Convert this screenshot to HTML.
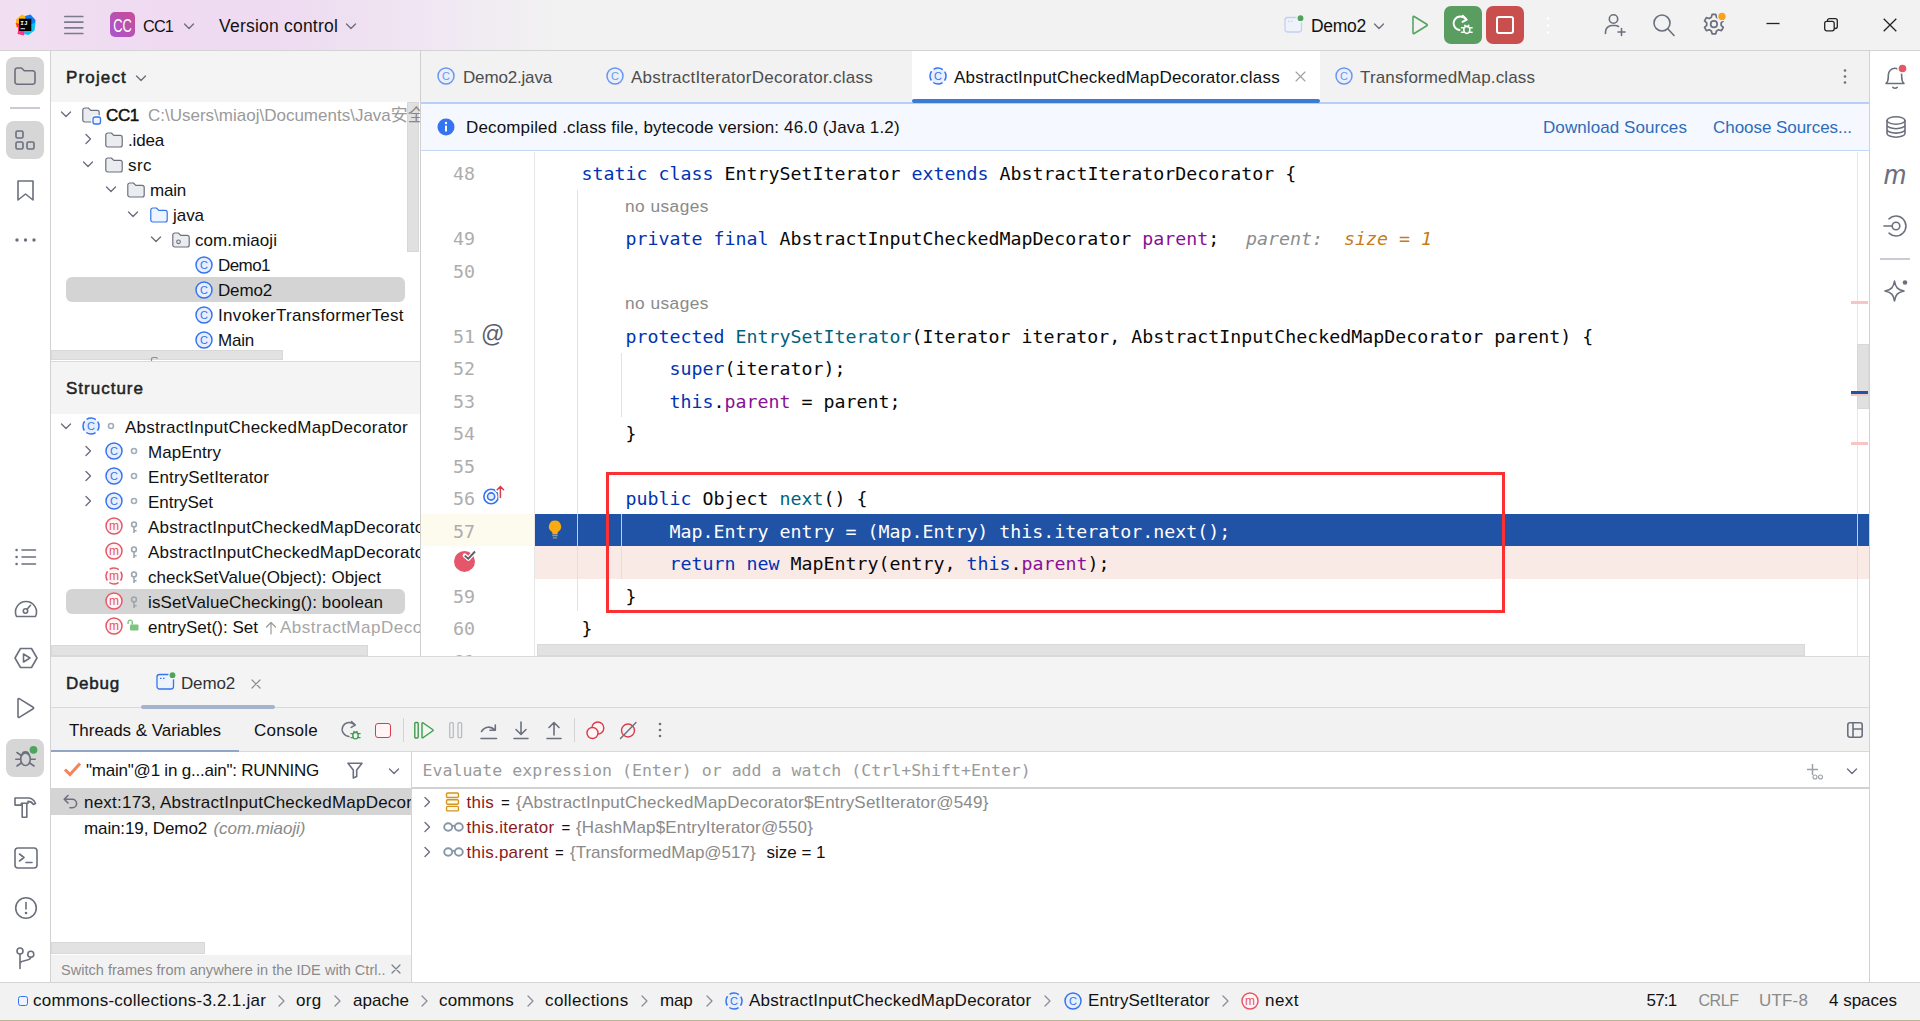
<!DOCTYPE html>
<html lang="en"><head><meta charset="utf-8"><title>CC1 – AbstractInputCheckedMapDecorator.class</title>
<style>
*{box-sizing:border-box;margin:0;padding:0}
html,body{width:1920px;height:1021px;overflow:hidden;background:#fff}
body{position:relative;font-family:"Liberation Sans","Noto Sans CJK SC",sans-serif;font-size:17px;color:#111;}
.a{position:absolute}
.t{position:absolute;white-space:pre;line-height:24px;height:24px;}
.t>span{position:relative;top:1px}
.b{font-weight:normal;-webkit-text-stroke:0.5px currentColor}
.g{color:#8a8a8a}
.m{font-family:"Liberation Mono","DejaVu Sans Mono",monospace}
svg{position:absolute;overflow:visible}
.ic{fill:none;stroke:#6c707e;stroke-width:1.6;stroke-linecap:round;stroke-linejoin:round}
/* regions */
#title{left:0;top:0;width:1920px;height:50px;background:linear-gradient(90deg,#f1dff1 0px,#efdaf2 180px,#eedcf1 300px,#f0e6f2 420px,#f2f2f2 560px,#f2f2f2 100%);}
#titleb{left:0;top:50px;width:1920px;height:1px;background:#d3d3d3}
#lstrip{left:0;top:51px;width:50px;height:931px;background:#fff}
#lstripb{left:50px;top:51px;width:1px;height:931px;background:#d2d2d2}
#rstrip{left:1870px;top:51px;width:50px;height:931px;background:#fff}
#rstripb{left:1869px;top:51px;width:1px;height:931px;background:#d2d2d2}
#projhead{left:51px;top:51px;width:369px;height:51px;background:#f4f4f4}
#projtree{left:51px;top:102px;width:369px;height:260px;background:#fff;overflow:hidden}
#structhead{left:51px;top:362px;width:369px;height:52px;background:#f4f4f4}
#structtree{left:51px;top:412px;width:369px;height:245px;background:#fff;overflow:hidden}
#edb{left:420px;top:51px;width:1px;height:606px;background:#cfcfcf}
#tabs{left:421px;top:51px;width:1448px;height:51px;background:#f2f2f2}
#banner{left:421px;top:104px;width:1448px;height:47px;background:#f5f8fe}
#editor{left:421px;top:152px;width:1448px;height:505px;background:#fff;overflow:hidden}
#debug{left:51px;top:657px;width:1818px;height:325px;background:#fff}
#status{left:0;top:982px;width:1920px;height:39px;background:#f2f2f2}
.row{position:absolute;left:0;width:100%;height:25px}
.code{position:absolute;white-space:pre;font-family:"DejaVu Sans Mono","Liberation Mono",monospace;font-size:18.27px;line-height:35px;height:35px;color:#080808;left:116.5px}
.ln{position:absolute;white-space:pre;font-family:"DejaVu Sans Mono","Liberation Mono",monospace;font-size:18.27px;line-height:35px;height:35px;color:#adadad;left:31px;width:23px;text-align:right}
.k{color:#0033b3}.f{color:#871094}.d{color:#00627a}
.hint{position:absolute;white-space:pre;font-size:17.3px;line-height:35px;height:35px;color:#8a8a8a;left:204px}
</style></head><body>
<div class="a" id="title"></div><div class="a" id="titleb"></div>
<div class="a" id="lstrip"></div><div class="a" id="lstripb"></div>
<div class="a" id="rstrip"></div><div class="a" id="rstripb"></div>
<div class="a" id="projhead"></div><div class="a" id="projtree"></div>
<div class="a" id="structhead"></div><div class="a" id="structtree"></div>
<div class="a" id="edb"></div>
<div class="a" id="tabs"></div>
<div class="a" id="banner"></div>
<div class="a" id="editor">
<div class="a" style="left:0;top:362px;width:114px;height:32px;background:#fdfaee"></div>
<div class="a" style="left:114px;top:362px;width:1334px;height:32px;background:#2052a5"></div>
<div class="a" style="left:114px;top:394px;width:1334px;height:33px;background:#faeae6"></div>
<div class="a" style="left:113px;top:0;width:1px;height:505px;background:#e6e6e6"></div>
<div class="a" style="left:156px;top:38px;width:1px;height:421px;background:#e2e2e2"></div>
<div class="a" style="left:200px;top:201px;width:1px;height:64px;background:#e2e2e2"></div>
<div class="a" style="left:200px;top:362px;width:1px;height:65px;background:#e2e2e2"></div>
<div class="a" style="left:156px;top:362px;width:1px;height:32px;background:#c3cce0"></div>
<div class="a" style="left:200px;top:362px;width:1px;height:32px;background:#c3cce0"></div>
<div class="a" style="left:156px;top:394px;width:1px;height:33px;background:#e6dcdc"></div>
<div class="a" style="left:200px;top:394px;width:1px;height:33px;background:#e6dcdc"></div>
<div class="ln" style="top:4px">48</div>
<div class="ln" style="top:69px">49</div>
<div class="ln" style="top:102px">50</div>
<div class="ln" style="top:167px">51</div>
<div class="ln" style="top:199px">52</div>
<div class="ln" style="top:232px">53</div>
<div class="ln" style="top:264px">54</div>
<div class="ln" style="top:297px">55</div>
<div class="ln" style="top:329px">56</div>
<div class="ln" style="top:362px">57</div>
<div class="ln" style="top:427px">59</div>
<div class="ln" style="top:459px">60</div>
<div class="ln" style="top:492px">61</div>
<div class="hint" style="top:37px"><span style="letter-spacing: 0.47px;">no usages</span></div>
<div class="hint" style="top:134px"><span style="letter-spacing: 0.47px;">no usages</span></div>
<div class="code" style="top:4px">    <span class="k">static</span> <span class="k">class</span> EntrySetIterator <span class="k">extends</span> AbstractIteratorDecorator {</div>
<div class="code" style="top:69px">        <span class="k">private</span> <span class="k">final</span> AbstractInputCheckedMapDecorator <span class="f">parent</span>;</div>
<div class="code" style="top:167px">        <span class="k">protected</span> <span class="d">EntrySetIterator</span>(Iterator iterator, AbstractInputCheckedMapDecorator parent) {</div>
<div class="code" style="top:199px">            <span class="k">super</span>(iterator);</div>
<div class="code" style="top:232px">            <span class="k">this</span>.<span class="f">parent</span> = parent;</div>
<div class="code" style="top:264px">        }</div>
<div class="code" style="top:329px">        <span class="k">public</span> Object <span class="d">next</span>() {</div>
<div class="code" style="top:362px"><span style="color:#fff">            Map.Entry entry = (Map.Entry) this.iterator.next();</span></div>
<div class="code" style="top:394px">            <span class="k">return</span> <span class="k">new</span> MapEntry(entry, <span class="k">this</span>.<span class="f">parent</span>);</div>
<div class="code" style="top:427px">        }</div>
<div class="code" style="top:459px">    }</div>
<div class="code" style="top:69px;left:825px;font-style:italic;color:#8c8c8c">parent:</div>
<div class="code" style="top:69px;left:923px;font-style:italic;color:#c77c1a">size = 1</div>
<div class="t" style="left:60px;top:166px;font-size:23px;color:#5a5d6b;line-height:33px;height:33px">@</div>
<svg style="left:62px;top:332px" width="24" height="22" viewBox="0 0 24 22"><circle cx="8.1" cy="12.5" r="7.2" fill="none" stroke="#3574f0" stroke-width="1.6"></circle><circle cx="8.1" cy="12.5" r="3.6" fill="#e7effd" stroke="#3574f0" stroke-width="1.6"></circle><path d="M17.400 14V2.800M14.200 6l3.200-3.400 3.200 3.400" fill="none" stroke="#fff" stroke-width="4.200" stroke-linecap="round" stroke-linejoin="round"></path><path d="M17.400 13.500V2.500M14.200 5.800l3.200-3.400 3.200 3.400" fill="none" stroke="#db3b4b" stroke-width="1.500" stroke-linecap="round" stroke-linejoin="round"></path></svg>
<svg style="left:124px;top:367px" width="20" height="22" viewBox="0 0 20 22"><path d="M10 1.400a6.100 6.100 0 0 0-3.500 11.100c.7.600 1 1.200 1 2v.700h5V14.500c0-.800.300-1.400 1-2A6.100 6.100 0 0 0 10 1.400z" fill="#fbaa12"></path><path d="M7.300 16.500h5.400M7.900 18.800h4.200" stroke="#a39a6b" stroke-width="1.300"></path></svg>
<svg style="left:31px;top:396px" width="28" height="28" viewBox="0 0 28 28"><circle cx="12.500" cy="13.400" r="10.500" fill="#e5566a"></circle><path d="M12.700 7.600l3.600 3.100 6.700-7.200" fill="none" stroke="#fff" stroke-width="4.200" stroke-linecap="round" stroke-linejoin="round"></path><path d="M12.700 7.600l3.600 3.100 6.700-7.200" fill="none" stroke="#5a6070" stroke-width="1.900" stroke-linecap="butt" stroke-linejoin="miter"></path></svg>
<div class="a" style="left:185px;top:320px;width:899px;height:141px;border:3px solid #fb3033"></div>
<div class="a" style="left:1436px;top:0;width:1px;height:505px;background:#e6e6e6"></div>
<div class="a" style="left:1436px;top:362px;width:1px;height:32px;background:#c3cce0"></div>
<div class="a" style="left:1436px;top:394px;width:1px;height:33px;background:#e6dcdc"></div>
<div class="a" style="left:1436px;top:192px;width:12px;height:65px;background:#e0e0e0;border:1px solid #d8d8d8"></div>
<div class="a" style="left:1430px;top:149px;width:17px;height:2.500px;background:#f9c4c4"></div>
<div class="a" style="left:1430px;top:239px;width:17px;height:2.500px;background:#2052a5"></div>
<div class="a" style="left:1430px;top:242px;width:17px;height:1.500px;background:#f9c4c4"></div>
<div class="a" style="left:1430px;top:290px;width:17px;height:2.500px;background:#f9c4c4"></div>
<div class="a" style="left:116px;top:492px;width:1268px;height:12px;background:#e2e2e2;border:1px solid #d9d9d9"></div>
</div>
<div class="a" id="debug"></div>
<div class="a" id="status"></div>

<svg width="0" height="0" style="position:absolute">
<defs>
<symbol id="cls" viewBox="0 0 18 18"><circle cx="9" cy="9" r="8" fill="#e7effd" stroke="#3574f0" stroke-width="1.5"></circle><text x="9.1" y="12.9" text-anchor="middle" font-family="Liberation Sans,sans-serif" font-size="11" fill="#3574f0">C</text></symbol>
<symbol id="clsd" viewBox="0 0 18 18"><circle cx="9" cy="9" r="8" fill="#e7effd" stroke="#3574f0" stroke-width="1.5" stroke-dasharray="9.8 2.77" stroke-dashoffset="4.9"></circle><text x="9.1" y="12.9" text-anchor="middle" font-family="Liberation Sans,sans-serif" font-size="11" fill="#3574f0">C</text></symbol>
<symbol id="mth" viewBox="0 0 18 18"><circle cx="9" cy="9" r="8" fill="#fff5f5" stroke="#e55765" stroke-width="1.5"></circle><text x="9" y="12.6" text-anchor="middle" font-family="Liberation Sans,sans-serif" font-size="12" fill="#e55765">m</text></symbol>
<symbol id="mthd" viewBox="0 0 18 18"><circle cx="9" cy="9" r="8" fill="#fff5f5" stroke="#e55765" stroke-width="1.5" stroke-dasharray="9.8 2.77" stroke-dashoffset="4.9"></circle><text x="9" y="12.6" text-anchor="middle" font-family="Liberation Sans,sans-serif" font-size="12" fill="#e55765">m</text></symbol>
<symbol id="fold" viewBox="0 0 18 18"><path d="M0.8 4a2 2 0 0 1 2-2h3.600l2.400 2.400h6.400a2 2 0 0 1 2 2v7.600a2 2 0 0 1-2 2H2.800a2 2 0 0 1-2-2z" fill="#ebecf0" stroke="#6c707e" stroke-width="1.2" stroke-linejoin="round"></path></symbol>
<symbol id="foldb" viewBox="0 0 18 18"><path d="M0.8 4a2 2 0 0 1 2-2h3.600l2.400 2.400h6.400a2 2 0 0 1 2 2v7.600a2 2 0 0 1-2 2H2.800a2 2 0 0 1-2-2z" fill="#edf3ff" stroke="#3574f0" stroke-width="1.2" stroke-linejoin="round"></path></symbol>
<symbol id="cd" viewBox="0 0 12 12"><path d="M1.5 4l4.5 4.5L10.5 4" fill="none" stroke="#6c707e" stroke-width="1.4" stroke-linecap="round" stroke-linejoin="round"></path></symbol>
<symbol id="cr" viewBox="0 0 12 12"><path d="M4 1.5l4.5 4.5L4 10.5" fill="none" stroke="#6c707e" stroke-width="1.4" stroke-linecap="round" stroke-linejoin="round"></path></symbol>
</defs></svg>

<svg style="left:14px;top:13px" width="24" height="24" viewBox="0 0 24 24"><path d="M2 6.500L8 1.500l5 3-3 8-8 2z" fill="#fdb60d"></path><path d="M1.500 10l5 1 3 11-6-1 1-5z" fill="#fe2857"></path><path d="M4 12l8 1-2 9.500-6-2z" fill="#ff318c"></path><path d="M11 3l5.500-1.500 5 5.500-1 8-7 1z" fill="#087cfa"></path><path d="M12 13l9.500-3.500-1 8-6 4.500-4.500-1z" fill="#07c3f2"></path><rect x="5" y="5.700" width="12.300" height="12.300" fill="#000"></rect><rect x="6.500" y="15.300" width="4.600" height="0.900" fill="#fff"></rect><text x="6.300" y="11.500" font-family="Liberation Mono,monospace" font-weight="bold" font-size="6" fill="#fff">IJ</text></svg>
<svg style="left:64px;top:15px" width="20" height="20" viewBox="0 0 20 20"><path d="M0.8 1.5h18M0.8 7.200h18M0.8 12.800h18M0.8 18.500h18" stroke="#797d8b" stroke-width="1.7" stroke-linecap="round"></path></svg>
<div class="a" style="left:110px;top:12px;width:25px;height:25px;border-radius:5px;background:linear-gradient(45deg,#a857d2,#c94b93)"></div>
<div class="t " style="left:100px;top:13.0px;width:45px;text-align:center;color:#fff;font-size:19px;transform:scaleX(0.68)"><span style="top:0.5px">CC</span></div>
<div class="t " style="left:143px;top:13.0px;font-size:16.3px"><span style="letter-spacing: -0.86px;">CC1</span></div>
<svg style="left:183px;top:19.5px" width="12" height="12"><use href="#cd"></use></svg>
<div class="t " style="left:219px;top:13.0px;font-size:17.5px"><span style="letter-spacing: 0.22px;">Version control</span></div>
<svg style="left:345px;top:19.5px" width="12" height="12"><use href="#cd"></use></svg>
<svg style="left:1284px;top:14px" width="22" height="20" viewBox="0 0 22 20"><rect x="1" y="3.5" width="16.5" height="14.5" rx="2.5" fill="#eef2fb" stroke="#c3d0ee" stroke-width="1.3"></rect><path d="M4 7.3h1.5M7 7.3h1.5" stroke="#c3d0ee" stroke-width="1.3"></path><circle cx="16.5" cy="4.2" r="4.2" fill="#f2f2f2"></circle><circle cx="16.5" cy="4.2" r="2.9" fill="#4fa45d"></circle></svg>
<div class="t " style="left:1311px;top:13.0px;font-size:17.5px"><span style="letter-spacing: -0.28px;">Demo2</span></div>
<svg style="left:1373px;top:19.5px" width="12" height="12"><use href="#cd"></use></svg>
<svg style="left:1410px;top:14px" width="20" height="22" viewBox="0 0 20 22"><path d="M3 3.2v15.6a.8.8 0 0 0 1.2.7l12.6-7.8a.8.8 0 0 0 0-1.4L4.2 2.5A.8.8 0 0 0 3 3.2z" fill="none" stroke="#55a561" stroke-width="1.6" stroke-linejoin="round"></path></svg>
<div class="a" style="left:1444px;top:6px;width:37.5px;height:37.5px;border-radius:7px;background:#599d60"></div>
<svg style="left:1452px;top:14px" width="22" height="22" viewBox="0 0 22 22"><path d="M14.300 5.800A6.800 6.800 0 1 0 7.500 16" fill="none" stroke="#fff" stroke-width="1.900" stroke-linecap="round"></path><path d="M10.800 1.800l3.900 3.800-4.200 2.300" fill="none" stroke="#fff" stroke-width="1.900" stroke-linecap="round" stroke-linejoin="round"></path><ellipse cx="14.800" cy="15.800" rx="3" ry="3.600" fill="none" stroke="#fff" stroke-width="1.600"></ellipse><path d="M12.800 11.300l1.200 1.400M16.800 11.300l-1.200 1.400M9.500 13.800h2.500M17.600 13.800h2.500M9.500 18.300h2.700M17.400 18.300h2.700" stroke="#fff" stroke-width="1.500" stroke-linecap="round"></path></svg>
<div class="a" style="left:1486px;top:6px;width:37.5px;height:37.5px;border-radius:7px;background:#c94f4f"></div>
<div class="a" style="left:1496px;top:16px;width:17.5px;height:17.5px;border-radius:3px;border:2.1px solid #fff"></div>
<svg style="left:1545px;top:16px" width="6" height="20"><circle cx="3" cy="2.5" r="1.3" fill="#fff"></circle><circle cx="3" cy="9.5" r="1.3" fill="#fff"></circle><circle cx="3" cy="16.5" r="1.3" fill="#fff"></circle></svg>
<svg style="left:1603px;top:12px" width="26" height="26" viewBox="0 0 26 26"><circle cx="10.5" cy="7" r="4.2" class="ic"></circle><path d="M2.5 21.5v-1.5a6.5 6.5 0 0 1 6.5-6.5h3a6.5 6.5 0 0 1 3.5 1" class="ic"></path><path d="M18.5 16.5v7M15 20h7" class="ic"></path></svg>
<svg style="left:1652px;top:13px" width="24" height="24" viewBox="0 0 24 24"><circle cx="10" cy="10" r="8" class="ic"></circle><path d="M16 16l6 6.5" class="ic"></path></svg>
<svg style="left:1701px;top:11px" width="28" height="28" viewBox="0 0 26 26"><path class="ic" d="M10.3 3.2h3.4l.7 2.7 1.9 1.1 2.7-.8 1.7 3-2 1.9v2.2l2 1.9-1.7 3-2.7-.8-1.9 1.1-.7 2.7h-3.4l-.7-2.7-1.9-1.1-2.7.8-1.7-3 2-1.9v-2.2l-2-1.9 1.7-3 2.7.8 1.9-1.1z"></path><circle cx="12" cy="12.2" r="3" class="ic"></circle><circle cx="19.5" cy="5" r="4.6" fill="#f2f2f2"></circle><circle cx="19.5" cy="5" r="3.4" fill="#f9a21b"></circle></svg>
<svg style="left:1766px;top:17px" width="14" height="14"><path d="M0.5 6.5h13" stroke="#222" stroke-width="1.3"></path></svg>
<svg style="left:1824px;top:18px" width="14" height="14" viewBox="0 0 14 14"><rect x="0.7" y="3.3" width="9.5" height="9.5" rx="2" fill="none" stroke="#222" stroke-width="1.3"></rect><path d="M3.5 3V2.7a2 2 0 0 1 2-2h5.8a2 2 0 0 1 2 2v5.8a2 2 0 0 1-2 2H10.5" fill="none" stroke="#222" stroke-width="1.3"></path></svg>
<svg style="left:1883px;top:18px" width="14" height="14" viewBox="0 0 14 14"><path d="M0.7 0.7l12.6 12.6M13.3 0.7L0.7 13.3" stroke="#222" stroke-width="1.3"></path></svg>
<div class="a" style="left:6px;top:57px;width:38px;height:38px;border-radius:8px;background:#d6d6d6"></div>
<svg style="left:13px;top:64px" width="24" height="24" viewBox="0 0 24 24"><path class="ic" stroke-width="1.7" d="M2 6.2A2.2 2.2 0 0 1 4.2 4h4.3l2.8 2.8h8.5A2.2 2.2 0 0 1 22 9v9a2.2 2.2 0 0 1-2.2 2.2H4.2A2.2 2.2 0 0 1 2 18z"></path></svg>
<div class="a" style="left:10px;top:107px;width:30px;height:1.5px;background:#c9ccd6"></div>
<div class="a" style="left:6px;top:121px;width:38px;height:38px;border-radius:8px;background:#d6d6d6"></div>
<svg style="left:14px;top:129px" width="22" height="22" viewBox="0 0 22 22"><rect x="2" y="2" width="7" height="7" rx="1.5" class="ic" stroke-width="1.7"></rect><rect x="2" y="13" width="7" height="7" rx="1.5" class="ic" stroke-width="1.7"></rect><rect x="13" y="13" width="7" height="7" rx="1.5" class="ic" stroke-width="1.7"></rect></svg>
<svg style="left:16px;top:179px" width="20" height="24" viewBox="0 0 20 24"><path class="ic" stroke-width="1.7" d="M2 2h15v19l-7.5-6L2 21z"></path></svg>
<svg style="left:14px;top:237px" width="24" height="6"><circle cx="3" cy="3" r="1.7" fill="#6c707e"></circle><circle cx="11.5" cy="3" r="1.7" fill="#6c707e"></circle><circle cx="20" cy="3" r="1.7" fill="#6c707e"></circle></svg>
<svg style="left:14px;top:546px" width="24" height="22" viewBox="0 0 24 22"><path class="ic" stroke-width="1.7" d="M8 4h13.500M8 11h13.500M8 18h13.500"></path><circle cx="2.600" cy="4" r="1.300" fill="#6c707e"></circle><circle cx="2.600" cy="11" r="1.300" fill="#6c707e"></circle><circle cx="2.600" cy="18" r="1.300" fill="#6c707e"></circle></svg>
<svg style="left:13px;top:596px" width="26" height="24" viewBox="0 0 26 24"><path class="ic" stroke-width="1.7" d="M3.5 20.5A10.5 10.5 0 1 1 22.5 20.5z"></path><circle cx="12.5" cy="15" r="2.2" class="ic" stroke-width="1.5"></circle><path class="ic" stroke-width="1.7" d="M14 13.3l3.5-4"></path></svg>
<svg style="left:13px;top:646px" width="26" height="24" viewBox="0 0 26 24"><path class="ic" stroke-width="1.7" d="M7.5 2.5h11l5.5 9.5-5.5 9.5h-11L2 12z"></path><path class="ic" stroke-width="1.6" d="M10.5 8v8l6.5-4z"></path></svg>
<svg style="left:15px;top:696px" width="22" height="24" viewBox="0 0 22 24"><path class="ic" stroke-width="1.7" d="M3 3.3v17.4a.8.8 0 0 0 1.2.7l14-8.7a.8.8 0 0 0 0-1.4l-14-8.7A.8.8 0 0 0 3 3.3z"></path></svg>
<div class="a" style="left:6px;top:738.7px;width:38px;height:38px;border-radius:8px;background:#d6d6d6"></div>
<svg style="left:13px;top:745px" width="26" height="26" viewBox="0 0 26 26"><ellipse cx="12.5" cy="14.2" rx="4.8" ry="6.3" class="ic" stroke-width="1.7"></ellipse><path class="ic" stroke-width="1.7" d="M9 9.600a3.600 3.600 0 0 1 7 0M7.500 14.200H2.800M22.200 14.200h-4.500M8.200 10.500L4 7.500M8.200 18l-4.200 3M16.800 18l4.200 3"></path><circle cx="20.500" cy="4.800" r="5.200" fill="#d6d6d6"></circle><circle cx="20.500" cy="4.800" r="3.900" fill="#4fa45d"></circle></svg>
<svg style="left:13px;top:794px" width="26" height="26" viewBox="0 0 26 26"><path class="ic" stroke-width="1.700" d="M2 4h13c3.500 0 6 2 7.500 5.500l-2 1c-1.400-2.100-3.200-3.100-5.500-3.100V9.300H8.300v1.800H2z"></path><path class="ic" stroke-width="1.700" d="M9.200 9.500V23.300h4.600V9.500"></path></svg>
<svg style="left:13px;top:846px" width="26" height="24" viewBox="0 0 26 24"><rect x="2" y="2" width="22" height="20" rx="3" class="ic" stroke-width="1.7"></rect><path class="ic" stroke-width="1.7" d="M6.5 8l4.5 3.5L6.5 15M13 16.5h6"></path></svg>
<svg style="left:14px;top:896px" width="24" height="24" viewBox="0 0 24 24"><circle cx="12" cy="12" r="10.3" class="ic" stroke-width="1.7"></circle><path class="ic" stroke-width="1.9" d="M12 6.5v6.5"></path><circle cx="12" cy="17" r="1.3" fill="#6c707e"></circle></svg>
<svg style="left:15px;top:945px" width="22" height="26" viewBox="0 0 22 26"><circle cx="5" cy="6" r="3" class="ic" stroke-width="1.700"></circle><circle cx="15.800" cy="9.200" r="3" class="ic" stroke-width="1.700"></circle><path class="ic" stroke-width="1.700" d="M5 9V23.500M15.800 12.200c0 4.500-10.800 2-10.800 6.500"></path></svg>
<svg style="left:1882px;top:63px" width="26" height="28" viewBox="0 0 26 28"><path class="ic" stroke-width="1.7" d="M4 20.5c1.8-1.5 2.3-3.5 2.3-6.5v-2a6.7 6.7 0 0 1 13.4 0v2c0 3 .5 5 2.3 6.5z"></path><path class="ic" stroke-width="1.7" d="M10.8 24.3a3 3 0 0 0 4.4 0"></path><circle cx="20.5" cy="5.5" r="5.2" fill="#fff"></circle><circle cx="20.5" cy="5.5" r="3.8" fill="#e55765"></circle></svg>
<svg style="left:1884px;top:115px" width="24" height="24" viewBox="0 0 24 24"><ellipse cx="12" cy="5.5" rx="9" ry="3.7" class="ic" stroke-width="1.7"></ellipse><path class="ic" stroke-width="1.7" d="M3 5.5v13c0 2 4 3.7 9 3.7s9-1.700 9-3.700v-13M3 10c0 2 4 3.700 9 3.700s9-1.700 9-3.700M3 14.400c0 2 4 3.700 9 3.700s9-1.700 9-3.700"></path></svg>
<div class="t" style="left:1882px;top:160px;width:26px;text-align:center;font-style:italic;font-size:27px;color:#6c707e;line-height:30px;height:30px">m</div>
<svg style="left:1882px;top:213px" width="26" height="26" viewBox="0 0 26 26"><path class="ic" stroke-width="1.7" d="M7 5.800a10 10 0 1 1 0 14.400"></path><circle cx="14" cy="13" r="3.800" class="ic" stroke-width="1.700"></circle><path class="ic" stroke-width="1.700" d="M2 13h8"></path></svg>
<div class="a" style="left:1880px;top:258px;width:30px;height:1.5px;background:#c9ccd6"></div>
<svg style="left:1882px;top:277px" width="28" height="28" viewBox="0 0 28 28"><path class="ic" stroke-width="1.700" d="M12.500 4c1 6.500 3 8.500 9.500 10-6.500 1.500-8.500 3.500-9.500 10-1-6.500-3-8.500-9.500-10 6.500-1.500 8.500-3.500 9.500-10z"></path><circle cx="23" cy="5.500" r="2.300" fill="#6c707e"></circle></svg>
<div class="a" style="left:51px;top:51px;width:369px;height:606px;overflow:hidden"><div class="a" style="left:-51px;top:-51px;width:1920px;height:1021px">
<div class="t b" style="left:66px;top:65.0px;color:#222"><span style="letter-spacing: 1.15px;">Project</span></div>
<svg style="left:134.5px;top:72px" width="12" height="12"><use href="#cd"></use></svg>
<div class="a" style="left:66px;top:277.2px;width:339px;height:25px;background:#d4d4d4;border-radius:6px"></div>
<svg style="left:60px;top:108px" width="12" height="12"><use href="#cd"></use></svg>
<svg style="left:82px;top:106px" width="22" height="20" viewBox="0 0 22 20"><path d="M0.8 4a2 2 0 0 1 2-2h3.600l2.400 2.400h6.400a2 2 0 0 1 2 2v7.600a2 2 0 0 1-2 2H2.800a2 2 0 0 1-2-2z" fill="#ebecf0" stroke="#6c707e" stroke-width="1.2"></path><rect x="10.5" y="10.5" width="9" height="8" rx="2" fill="#fff" stroke="#fff" stroke-width="2.5"></rect><rect x="11" y="11" width="7.5" height="7" rx="2" fill="#edf3ff" stroke="#3574f0" stroke-width="1.3"></rect></svg>
<div class="t b" style="left:106px;top:103.0px;"><span style="letter-spacing: -0.34px;">CC1</span></div>
<div class="t " style="left:148px;top:103.0px;color:#9a9a9a"><span>C:\Users\miaoj\Documents\Java安全\CC1</span></div>
<svg style="left:82px;top:133px" width="12" height="12"><use href="#cr"></use></svg>
<svg style="left:105px;top:131px" width="18" height="18"><use href="#fold"></use></svg>
<div class="t " style="left:128px;top:128.0px;"><span style="letter-spacing: -0.17px;">.idea</span></div>
<svg style="left:82px;top:158px" width="12" height="12"><use href="#cd"></use></svg>
<svg style="left:105px;top:156px" width="18" height="18"><use href="#fold"></use></svg>
<div class="t " style="left:128px;top:153.0px;"><span style="letter-spacing: 0.44px;">src</span></div>
<svg style="left:105px;top:183px" width="12" height="12"><use href="#cd"></use></svg>
<svg style="left:127px;top:181px" width="18" height="18"><use href="#fold"></use></svg>
<div class="t " style="left:150px;top:178.0px;"><span style="letter-spacing: -0.21px;">main</span></div>
<svg style="left:127px;top:208px" width="12" height="12"><use href="#cd"></use></svg>
<svg style="left:150px;top:206px" width="18" height="18"><use href="#foldb"></use></svg>
<div class="t " style="left:173px;top:203.0px;"><span style="letter-spacing: -0.05px;">java</span></div>
<svg style="left:150px;top:233px" width="12" height="12"><use href="#cd"></use></svg>
<svg style="left:172px;top:231px" width="18" height="18" viewBox="0 0 18 18"><path d="M0.8 4a2 2 0 0 1 2-2h3.600l2.400 2.400h6.400a2 2 0 0 1 2 2v7.600a2 2 0 0 1-2 2H2.800a2 2 0 0 1-2-2z" fill="#ebecf0" stroke="#6c707e" stroke-width="1.2"></path><circle cx="6.5" cy="10.8" r="1.8" fill="none" stroke="#6c707e" stroke-width="1.1"></circle></svg>
<div class="t " style="left:195px;top:228.0px;"><span style="letter-spacing: 0.08px;">com.miaoji</span></div>
<svg style="left:195px;top:256px" width="18" height="18"><use href="#cls"></use></svg>
<div class="t " style="left:218px;top:253.0px;"><span style="letter-spacing: -0.56px;">Demo1</span></div>
<svg style="left:195px;top:281px" width="18" height="18"><use href="#cls"></use></svg>
<div class="t " style="left:218px;top:278.0px;"><span style="letter-spacing: -0.16px;">Demo2</span></div>
<svg style="left:195px;top:306px" width="18" height="18"><use href="#cls"></use></svg>
<div class="t " style="left:218px;top:303.0px;"><span style="letter-spacing: 0.32px;">InvokerTransformerTest</span></div>
<svg style="left:195px;top:331px" width="18" height="18"><use href="#cls"></use></svg>
<div class="t " style="left:218px;top:328.0px;"><span style="letter-spacing: -0.21px;">Main</span></div>
<div class="a" style="left:407px;top:102px;width:12px;height:150px;background:rgba(0,0,0,0.12);border:1px solid rgba(0,0,0,0.04)"></div>
<div class="a" style="left:51px;top:349px;width:369px;height:13px;background:#fff"></div>
<div class="a" style="left:51px;top:350px;width:232px;height:10px;background:#e2e2e2;border:1px solid #d8d8d8"></div>
<svg style="left:150px;top:355px" width="18" height="7" viewBox="0 0 18 7"><path d="M1.5 7V4.2a1.7 1.7 0 0 1 1.7-1.7h3.3l1 1" fill="none" stroke="#8a8d98" stroke-width="1.2"></path></svg>
<div class="a" style="left:51px;top:362px;width:369px;height:52px;background:#f4f4f4"></div><div class="a" style="left:51px;top:361px;width:369px;height:1px;background:#dadada"></div>
<div class="t b" style="left:66px;top:376.0px;color:#222"><span style="letter-spacing: 1px;">Structure</span></div>
<div class="a" style="left:66px;top:588.7px;width:339px;height:25px;background:#d4d4d4;border-radius:6px"></div>
<svg style="left:60px;top:420px" width="12" height="12"><use href="#cd"></use></svg>
<svg style="left:82px;top:417px" width="18" height="18"><use href="#clsd"></use></svg>
<svg style="left:107px;top:422px" width="8" height="8"><circle cx="4" cy="4" r="2.500" fill="none" stroke="#a3adb6" stroke-width="1.600"></circle></svg>
<div class="t " style="left:125px;top:415.0px;"><span style="letter-spacing: 0.25px;">AbstractInputCheckedMapDecorator</span></div>
<svg style="left:82px;top:445px" width="12" height="12"><use href="#cr"></use></svg>
<svg style="left:105px;top:442px" width="18" height="18"><use href="#cls"></use></svg>
<svg style="left:130px;top:447px" width="8" height="8"><circle cx="4" cy="4" r="2.500" fill="none" stroke="#a3adb6" stroke-width="1.600"></circle></svg>
<div class="t " style="left:148px;top:440.0px;"><span style="letter-spacing: 0.03px;">MapEntry</span></div>
<svg style="left:82px;top:470px" width="12" height="12"><use href="#cr"></use></svg>
<svg style="left:105px;top:467px" width="18" height="18"><use href="#cls"></use></svg>
<svg style="left:130px;top:472px" width="8" height="8"><circle cx="4" cy="4" r="2.500" fill="none" stroke="#a3adb6" stroke-width="1.600"></circle></svg>
<div class="t " style="left:148px;top:465.0px;"><span style="letter-spacing: 0.12px;">EntrySetIterator</span></div>
<svg style="left:82px;top:495px" width="12" height="12"><use href="#cr"></use></svg>
<svg style="left:105px;top:492px" width="18" height="18"><use href="#cls"></use></svg>
<svg style="left:130px;top:497px" width="8" height="8"><circle cx="4" cy="4" r="2.500" fill="none" stroke="#a3adb6" stroke-width="1.600"></circle></svg>
<div class="t " style="left:148px;top:490.0px;"><span style="letter-spacing: -0.03px;">EntrySet</span></div>
<svg style="left:105px;top:517px" width="18" height="18"><use href="#mth"></use></svg>
<svg style="left:130px;top:520.5px" width="9" height="13" viewBox="0 0 9 13"><circle cx="4" cy="3.400" r="2.400" fill="none" stroke="#9aa7b0" stroke-width="1.600"></circle><path d="M4 5.800V12M4 9.800h2.600" fill="none" stroke="#9aa7b0" stroke-width="1.600"></path></svg>
<div class="t " style="left:148px;top:515.0px;"><span style="letter-spacing: 0.23px;">AbstractInputCheckedMapDecorator(Map)</span></div>
<svg style="left:105px;top:542px" width="18" height="18"><use href="#mth"></use></svg>
<svg style="left:130px;top:545.5px" width="9" height="13" viewBox="0 0 9 13"><circle cx="4" cy="3.400" r="2.400" fill="none" stroke="#9aa7b0" stroke-width="1.600"></circle><path d="M4 5.800V12M4 9.800h2.600" fill="none" stroke="#9aa7b0" stroke-width="1.600"></path></svg>
<div class="t " style="left:148px;top:540.0px;"><span style="letter-spacing: 0.23px;">AbstractInputCheckedMapDecorator(Map)</span></div>
<svg style="left:105px;top:567px" width="18" height="18"><use href="#mthd"></use></svg>
<svg style="left:130px;top:570.5px" width="9" height="13" viewBox="0 0 9 13"><circle cx="4" cy="3.400" r="2.400" fill="none" stroke="#9aa7b0" stroke-width="1.600"></circle><path d="M4 5.800V12M4 9.800h2.600" fill="none" stroke="#9aa7b0" stroke-width="1.600"></path></svg>
<div class="t " style="left:148px;top:565.0px;"><span style="letter-spacing: 0.06px;">checkSetValue(Object): Object</span></div>
<svg style="left:105px;top:592px" width="18" height="18"><use href="#mth"></use></svg>
<svg style="left:130px;top:595.5px" width="9" height="13" viewBox="0 0 9 13"><circle cx="4" cy="3.400" r="2.400" fill="none" stroke="#9aa7b0" stroke-width="1.600"></circle><path d="M4 5.800V12M4 9.800h2.600" fill="none" stroke="#9aa7b0" stroke-width="1.600"></path></svg>
<div class="t " style="left:148px;top:590.0px;"><span style="letter-spacing: 0.1px;">isSetValueChecking(): boolean</span></div>
<svg style="left:105px;top:617px" width="18" height="18"><use href="#mth"></use></svg>
<svg style="left:127px;top:619px" width="12" height="12" viewBox="0 0 12 12"><rect x="3" y="5.500" width="8.500" height="6" rx="1" fill="#7cc47f"></rect><path d="M5.300 5.500V3.200a2.100 2.100 0 0 0-4.200 0V5" fill="none" stroke="#7cc47f" stroke-width="1.400"></path></svg>
<div class="t " style="left:148px;top:615.0px;"><span style="letter-spacing: 0.03px;">entrySet(): Set</span></div>
<svg style="left:265px;top:621px" width="12" height="14" viewBox="0 0 12 14"><path d="M6 13V1.500M1.500 6l4.500-4.500L10.500 6" fill="none" stroke="#9a9a9a" stroke-width="1.200" stroke-linecap="round" stroke-linejoin="round"></path></svg>
<div class="t " style="left:280px;top:615.0px;color:#a6a6a6"><span style="letter-spacing: 0.5px;">AbstractMapDecorator</span></div>
<div class="a" style="left:51px;top:643px;width:369px;height:14px;background:#fff"></div>
<div class="a" style="left:51px;top:645px;width:317px;height:11px;background:#e2e2e2;border:1px solid #d8d8d8"></div>
</div></div>
<!--STRUCT-->
<div class="a" style="left:912px;top:51px;width:408px;height:51px;background:#fff"></div>
<div class="a" style="left:421px;top:102px;width:1448px;height:2px;background:#b8cff8"></div>
<div class="a" style="left:912px;top:99px;width:408px;height:4px;background:#3a7bd5;border-radius:2px"></div>
<svg style="left:437px;top:67px;opacity:.72" width="18" height="18"><use href="#cls"></use></svg>
<div class="t " style="left:463px;top:65.0px;color:#4d4d4d"><span style="letter-spacing: -0.17px;">Demo2.java</span></div>
<svg style="left:606px;top:67px;opacity:.72" width="18" height="18"><use href="#cls"></use></svg>
<div class="t " style="left:631px;top:65.0px;color:#4d4d4d"><span style="letter-spacing: 0.28px;">AbstractIteratorDecorator.class</span></div>
<svg style="left:929px;top:67px" width="18" height="18"><use href="#clsd"></use></svg>
<div class="t " style="left:954px;top:65.0px;color:#111"><span style="letter-spacing: 0.22px;">AbstractInputCheckedMapDecorator.class</span></div>
<svg style="left:1294.5px;top:70.5px" width="12" height="12"><path d="M1 1l9 9M10 1l-9 9" stroke="#a0a0a0" stroke-width="1.1" fill="none" stroke-linecap="round"></path></svg>
<svg style="left:1335px;top:67px;opacity:.72" width="18" height="18"><use href="#cls"></use></svg>
<div class="t " style="left:1360px;top:65.0px;color:#4d4d4d"><span style="letter-spacing: 0.14px;">TransformedMap.class</span></div>
<svg style="left:1842px;top:68px" width="6" height="18"><circle cx="3" cy="2.5" r="1.3" fill="#6c707e"></circle><circle cx="3" cy="8.5" r="1.3" fill="#6c707e"></circle><circle cx="3" cy="14.5" r="1.3" fill="#6c707e"></circle></svg>
<div class="a" style="left:421px;top:150px;width:1448px;height:1px;background:#c2d6f5"></div>
<svg style="left:437px;top:118px" width="18" height="18" viewBox="0 0 18 18"><circle cx="9" cy="9" r="8.5" fill="#3574f0"></circle><circle cx="9" cy="5" r="1.2" fill="#fff"></circle><rect x="8" y="7.5" width="2" height="6" rx="0.6" fill="#fff"></rect></svg>
<div class="t " style="left:466px;top:115.0px;"><span style="letter-spacing: 0.15px;">Decompiled .class file, bytecode version: 46.0 (Java 1.2)</span></div>
<div class="t " style="left:1543px;top:115.0px;color:#2e6cb8"><span style="letter-spacing: 0.08px;">Download Sources</span></div>
<div class="t " style="left:1713px;top:115.0px;color:#2e6cb8"><span style="letter-spacing: -0.05px;">Choose Sources...</span></div>
<!--EDITOR-->
<div class="a" style="left:51px;top:656px;width:1818px;height:1px;background:#d9d9d9;"></div>
<div class="a" style="left:51px;top:657px;width:1818px;height:50px;background:#f4f4f4;"></div>
<div class="a" style="left:51px;top:707px;width:1818px;height:1px;background:#d9d9d9;"></div>
<div class="a" style="left:51px;top:708px;width:1818px;height:43px;background:#f2f2f2;"></div>
<div class="a" style="left:51px;top:751px;width:1818px;height:1px;background:#d9d9d9;"></div>
<div class="t b" style="left:66px;top:671.0px;color:#222"><span style="letter-spacing: 0.78px;">Debug</span></div>
<svg style="left:156px;top:671px" width="22" height="20" viewBox="0 0 22 20"><rect x="1" y="3.5" width="16.5" height="14.5" rx="2.5" fill="#edf3ff" stroke="#3574f0" stroke-width="1.3"></rect><path d="M4 7.3h1.5M7 7.3h1.5" stroke="#3574f0" stroke-width="1.3"></path><circle cx="16.5" cy="4.2" r="4.2" fill="#f4f4f4"></circle><circle cx="16.5" cy="4.2" r="2.9" fill="#4fa45d"></circle></svg>
<div class="t " style="left:181px;top:671.0px;color:#333"><span style="letter-spacing: -0.16px;">Demo2</span></div>
<svg style="left:251px;top:679px" width="10" height="10"><path d="M1 1l8 8M9 1l-8 8" stroke="#8a8a8a" stroke-width="1.2" fill="none" stroke-linecap="round"></path></svg>
<div class="a" style="left:141px;top:704.5px;width:134px;height:4px;background:#a6b3cc;border-radius:2px"></div>
<div class="t " style="left:69px;top:718.0px;"><span style="letter-spacing: -0.04px;">Threads &amp; Variables</span></div>
<div class="a" style="left:51px;top:749.5px;width:188px;height:2.5px;background:#93a5c6;"></div>
<div class="t " style="left:254px;top:718.0px;"><span style="letter-spacing: 0.23px;">Console</span></div>
<svg style="left:341px;top:720px" width="22" height="22" viewBox="0 0 22 22"><path d="M13.800 5.200A7 7 0 1 0 8 16.400" fill="none" stroke="#6c707e" stroke-width="1.500" stroke-linecap="round"></path><path d="M10.500 1.500l3.700 3.600-4 2.300" fill="none" stroke="#6c707e" stroke-width="1.500" stroke-linecap="round" stroke-linejoin="round"></path><ellipse cx="14.500" cy="15.500" rx="2.700" ry="3.400" fill="none" stroke="#3f9b4f" stroke-width="1.400"></ellipse><path d="M12.900 11.500l1 1.200M16.100 11.500l-1 1.200M10 13.700h2M17.100 13.700h2M10 17.700h2.200M16.900 17.700h2.200" stroke="#3f9b4f" stroke-width="1.300" stroke-linecap="round"></path></svg>
<div class="a" style="left:375px;top:722.5px;width:15.500px;height:15px;border-radius:3px;border:1.600px solid #db3b4b;background:#fff5f5"></div>
<div class="a" style="left:403px;top:718px;width:1px;height:24px;background:#d4d4d4;"></div>
<svg style="left:414px;top:721px" width="20" height="19" viewBox="0 0 20 19"><rect x="0.800" y="1.500" width="3.400" height="15.500" rx="1" fill="#eef8ef" stroke="#3f9b4f" stroke-width="1.400"></rect><path d="M8 2.300v14a.6.6 0 0 0 .9.500l10-7a.6.6 0 0 0 0-1l-10-7A.6.600 0 0 0 8 2.300z" fill="#eef8ef" stroke="#3f9b4f" stroke-width="1.400" stroke-linejoin="round"></path></svg>
<svg style="left:449px;top:722px" width="14" height="17" viewBox="0 0 14 17"><rect x="0.700" y="0.700" width="3.600" height="15" rx="1" fill="none" stroke="#b9bcc4" stroke-width="1.300"></rect><rect x="9" y="0.700" width="3.600" height="15" rx="1" fill="none" stroke="#b9bcc4" stroke-width="1.300"></rect></svg>
<svg style="left:480px;top:721px" width="18" height="19" viewBox="0 0 18 19"><path class="ic" stroke-width="1.400" d="M1.500 10.500c3-5 9-6 13.500-1.500M15.300 4v5.300H10M1 17.500h15.500"></path></svg>
<svg style="left:513px;top:721px" width="16" height="19" viewBox="0 0 16 19"><path class="ic" stroke-width="1.400" d="M8 1v12M3 8.500l5 5 5-5M1 17.500h14"></path></svg>
<svg style="left:546px;top:721px" width="16" height="19" viewBox="0 0 16 19"><path class="ic" stroke-width="1.400" d="M8 14V2M3 6.500l5-5 5 5M1 17.500h14"></path></svg>
<div class="a" style="left:574px;top:718px;width:1px;height:24px;background:#d4d4d4;"></div>
<svg style="left:586px;top:721px" width="19" height="19" viewBox="0 0 19 19"><circle cx="11.800" cy="7" r="6" fill="#fff5f5" stroke="#db3b4b" stroke-width="1.400"></circle><circle cx="6.500" cy="12" r="5.500" fill="#fff5f5" stroke="#db3b4b" stroke-width="1.400"></circle></svg>
<svg style="left:619px;top:721px" width="19" height="19" viewBox="0 0 19 19"><circle cx="9" cy="9.500" r="6.500" fill="none" stroke="#db3b4b" stroke-width="1.400"></circle><path d="M1.500 17.500L17 1.500" stroke="#6c707e" stroke-width="1.400" stroke-linecap="round"></path></svg>
<svg style="left:657px;top:722px" width="6" height="17"><circle cx="3" cy="2" r="1.300" fill="#6c707e"></circle><circle cx="3" cy="8" r="1.300" fill="#6c707e"></circle><circle cx="3" cy="14" r="1.300" fill="#6c707e"></circle></svg>
<svg style="left:1847px;top:722px" width="16" height="16" viewBox="0 0 16 16"><rect x="0.800" y="0.800" width="14.400" height="14.400" rx="2.200" class="ic" stroke-width="1.400"></rect><path class="ic" stroke-width="1.400" d="M6 1v14M6 7h9"></path></svg>
<svg style="left:63px;top:761px" width="19" height="17" viewBox="0 0 19 17"><path d="M2 8.500l5 5L17 2.500" fill="none" stroke="#f4855a" stroke-width="3"></path></svg>
<div class="t " style="left:86px;top:758.0px;"><span style="letter-spacing: -0.22px;">"main"@1 in g...ain": RUNNING</span></div>
<svg style="left:347px;top:762px" width="16" height="17" viewBox="0 0 16 17"><path class="ic" stroke-width="1.400" d="M1 1.200h14l-5.300 6.800v6.500l-3.400 1.500V8z"></path></svg>
<svg style="left:388px;top:765px" width="12" height="12"><use href="#cd"></use></svg>
<div class="a" style="left:411px;top:752px;width:1px;height:230px;background:#d4d4d4;"></div>
<div class="t" style="left:422.5px;top:758.0px;color:#9a9a9a;font-size:16.56px;font-family:'DejaVu Sans Mono','Liberation Mono',monospace"><span style="letter-spacing: 0.01px;">Evaluate expression (Enter) or add a watch (Ctrl+Shift+Enter)</span></div>
<svg style="left:1806px;top:763px" width="18" height="18" viewBox="0 0 18 18"><path d="M6.500 1v11M1 6.500h11" stroke="#9da0a8" stroke-width="1.500" fill="none"></path><circle cx="9" cy="14" r="2" fill="none" stroke="#9da0a8" stroke-width="1.100"></circle><circle cx="14.500" cy="14" r="2" fill="none" stroke="#9da0a8" stroke-width="1.100"></circle></svg>
<svg style="left:1845.5px;top:765px" width="12" height="12"><use href="#cd"></use></svg>
<div class="a" style="left:412px;top:787px;width:1457px;height:2px;background:#d2d2d2;"></div>
<div class="a" style="left:51px;top:752px;width:360px;height:203px;overflow:hidden"><div class="a" style="left:-51px;top:-752px;width:1920px;height:1021px">
<div class="a" style="left:51px;top:788px;width:360px;height:26.5px;background:#d4d4d4;"></div>
<svg style="left:63px;top:794px" width="16" height="15" viewBox="0 0 16 15"><path class="ic" stroke="#8a8d98" stroke-width="1.200" d="M5 1.500L1.200 5.200 5 9M1.500 5.200h7.800a4.300 4.300 0 0 1 0 8.600H7"></path></svg>
<div class="t " style="left:84px;top:790.0px;"><span style="letter-spacing: 0.23px;">next:173, AbstractInputCheckedMapDecorator$EntrySetIterator</span></div>
<div class="t " style="left:84px;top:816.0px;"><span style="letter-spacing: -0.12px;">main:19, Demo2</span></div>
<div class="t " style="left:213.5px;top:816.0px;font-style:italic;color:#8a8a8a"><span style="letter-spacing: -0.05px;">(com.miaoji)</span></div>
<div class="a" style="left:51px;top:942px;width:154px;height:12px;background:#e2e2e2;border:1px solid #d8d8d8"></div>
</div></div>
<div class="a" style="left:51px;top:955px;width:360px;height:27px;background:#f2f2f2;"></div>
<div class="t " style="left:61px;top:957.0px;font-size:14.500px;color:#8a8a8a"><span style="letter-spacing: 0.03px;">Switch frames from anywhere in the IDE with Ctrl..</span></div>
<svg style="left:391px;top:964px" width="10" height="10"><path d="M1 1l8 8M9 1l-8 8" stroke="#7a7e8a" stroke-width="1.200" fill="none" stroke-linecap="round"></path></svg>
<svg style="left:421px;top:796px" width="12" height="12"><use href="#cr"></use></svg>
<svg style="left:421px;top:821px" width="12" height="12"><use href="#cr"></use></svg>
<svg style="left:421px;top:846px" width="12" height="12"><use href="#cr"></use></svg>
<svg style="left:445px;top:792px" width="16" height="20" viewBox="0 0 16 20"><rect x="1.500" y="1" width="12" height="4.500" rx="1.200" fill="#fff8e6" stroke="#d29524" stroke-width="1.400"></rect><rect x="1.500" y="7.700" width="12" height="4.500" rx="1.200" fill="#fff8e6" stroke="#d29524" stroke-width="1.400"></rect><rect x="1.500" y="14.400" width="12" height="4.500" rx="1.200" fill="#fff8e6" stroke="#d29524" stroke-width="1.400"></rect></svg>
<svg style="left:443px;top:822px" width="21" height="10" viewBox="0 0 21 10"><ellipse cx="5.2" cy="5" rx="4" ry="3.7" fill="none" stroke="#8796a5" stroke-width="1.9"></ellipse><ellipse cx="15.8" cy="5" rx="4" ry="3.7" fill="none" stroke="#8796a5" stroke-width="1.9"></ellipse><path d="M9 3.8h3" stroke="#8796a5" stroke-width="1.8"></path></svg>
<svg style="left:443px;top:847px" width="21" height="10" viewBox="0 0 21 10"><ellipse cx="5.2" cy="5" rx="4" ry="3.7" fill="none" stroke="#8796a5" stroke-width="1.9"></ellipse><ellipse cx="15.8" cy="5" rx="4" ry="3.7" fill="none" stroke="#8796a5" stroke-width="1.9"></ellipse><path d="M9 3.8h3" stroke="#8796a5" stroke-width="1.8"></path></svg>
<div class="t " style="left:466.5px;top:790.0px;color:#8b1a1a"><span style="letter-spacing: 0.26px;">this</span></div>
<div class="t " style="left:501px;top:790.0px;"><span style="font-size:15px">=</span></div>
<div class="t " style="left:516px;top:790.0px;color:#8a8a8a"><span style="letter-spacing: 0.22px;">{AbstractInputCheckedMapDecorator$EntrySetIterator@549}</span></div>
<div class="t " style="left:466.5px;top:815.0px;color:#8b1a1a"><span style="letter-spacing: 0.3px;">this.iterator</span></div>
<div class="t " style="left:561.5px;top:815.0px;"><span style="font-size:15px">=</span></div>
<div class="t " style="left:576px;top:815.0px;color:#8a8a8a"><span style="letter-spacing: 0.16px;">{HashMap$EntryIterator@550}</span></div>
<div class="t " style="left:466.5px;top:840.0px;color:#8b1a1a"><span style="letter-spacing: 0.24px;">this.parent</span></div>
<div class="t " style="left:555px;top:840.0px;"><span style="font-size:15px">=</span></div>
<div class="t " style="left:570px;top:840.0px;color:#8a8a8a"><span style="letter-spacing: -0.01px;">{TransformedMap@517}</span></div>
<div class="t " style="left:766.5px;top:840.0px;"><span style="letter-spacing: -0.01px;">size = 1</span></div>
<div class="a" style="left:0px;top:982px;width:1920px;height:1px;background:#d4d4d4;"></div>
<div class="a" style="left:0px;top:1020px;width:1920px;height:1px;background:#b9b78f;"></div>
<div class="a" style="left:18px;top:996px;width:9.500px;height:9.500px;border-radius:2.500px;border:1.500px solid #3574f0;background:#edf3ff"></div>
<div class="t " style="left:33px;top:987.5px;"><span style="letter-spacing: 0.25px;">commons-collections-3.2.1.jar</span></div>
<svg style="left:277.5px;top:994.5px" width="7" height="12" viewBox="0 0 7 12"><path d="M1 1l5 5-5 5" fill="none" stroke="#8a8d98" stroke-width="1.300" stroke-linecap="round" stroke-linejoin="round"></path></svg>
<div class="t " style="left:296px;top:987.5px;"><span style="letter-spacing: 0.31px;">org</span></div>
<svg style="left:334px;top:994.5px" width="7" height="12" viewBox="0 0 7 12"><path d="M1 1l5 5-5 5" fill="none" stroke="#8a8d98" stroke-width="1.300" stroke-linecap="round" stroke-linejoin="round"></path></svg>
<div class="t " style="left:353px;top:987.5px;"><span style="letter-spacing: 0.04px;">apache</span></div>
<svg style="left:421px;top:994.5px" width="7" height="12" viewBox="0 0 7 12"><path d="M1 1l5 5-5 5" fill="none" stroke="#8a8d98" stroke-width="1.300" stroke-linecap="round" stroke-linejoin="round"></path></svg>
<div class="t " style="left:439px;top:987.5px;"><span style="letter-spacing: 0.19px;">commons</span></div>
<svg style="left:527px;top:994.5px" width="7" height="12" viewBox="0 0 7 12"><path d="M1 1l5 5-5 5" fill="none" stroke="#8a8d98" stroke-width="1.300" stroke-linecap="round" stroke-linejoin="round"></path></svg>
<div class="t " style="left:545px;top:987.5px;"><span style="letter-spacing: 0.38px;">collections</span></div>
<svg style="left:641px;top:994.5px" width="7" height="12" viewBox="0 0 7 12"><path d="M1 1l5 5-5 5" fill="none" stroke="#8a8d98" stroke-width="1.300" stroke-linecap="round" stroke-linejoin="round"></path></svg>
<div class="t " style="left:660px;top:987.5px;"><span style="letter-spacing: -0.19px;">map</span></div>
<svg style="left:706px;top:994.5px" width="7" height="12" viewBox="0 0 7 12"><path d="M1 1l5 5-5 5" fill="none" stroke="#8a8d98" stroke-width="1.300" stroke-linecap="round" stroke-linejoin="round"></path></svg>
<svg style="left:725px;top:991.5px" width="18" height="18"><use href="#clsd"></use></svg>
<div class="t " style="left:749px;top:987.5px;"><span style="letter-spacing: 0.23px;">AbstractInputCheckedMapDecorator</span></div>
<svg style="left:1044px;top:994.5px" width="7" height="12" viewBox="0 0 7 12"><path d="M1 1l5 5-5 5" fill="none" stroke="#8a8d98" stroke-width="1.300" stroke-linecap="round" stroke-linejoin="round"></path></svg>
<svg style="left:1064px;top:991.5px" width="18" height="18"><use href="#cls"></use></svg>
<div class="t " style="left:1088px;top:987.5px;"><span style="letter-spacing: 0.18px;">EntrySetIterator</span></div>
<svg style="left:1221.5px;top:994.5px" width="7" height="12" viewBox="0 0 7 12"><path d="M1 1l5 5-5 5" fill="none" stroke="#8a8d98" stroke-width="1.300" stroke-linecap="round" stroke-linejoin="round"></path></svg>
<svg style="left:1241px;top:991.5px" width="18" height="18"><use href="#mth"></use></svg>
<div class="t " style="left:1265px;top:987.5px;"><span style="letter-spacing: 0.46px;">next</span></div>
<div class="t " style="left:1646.5px;top:987.5px;"><span style="letter-spacing: -0.77px;">57:1</span></div>
<div class="t " style="left:1698.5px;top:987.5px;color:#8a8a8a;font-size:16px"><span style="letter-spacing: -0.45px;">CRLF</span></div>
<div class="t " style="left:1759px;top:987.5px;color:#8a8a8a"><span style="letter-spacing: 0.17px;">UTF-8</span></div>
<div class="t " style="left:1829px;top:987.5px;"><span style="letter-spacing: -0.01px;">4 spaces</span></div>

</body></html>
